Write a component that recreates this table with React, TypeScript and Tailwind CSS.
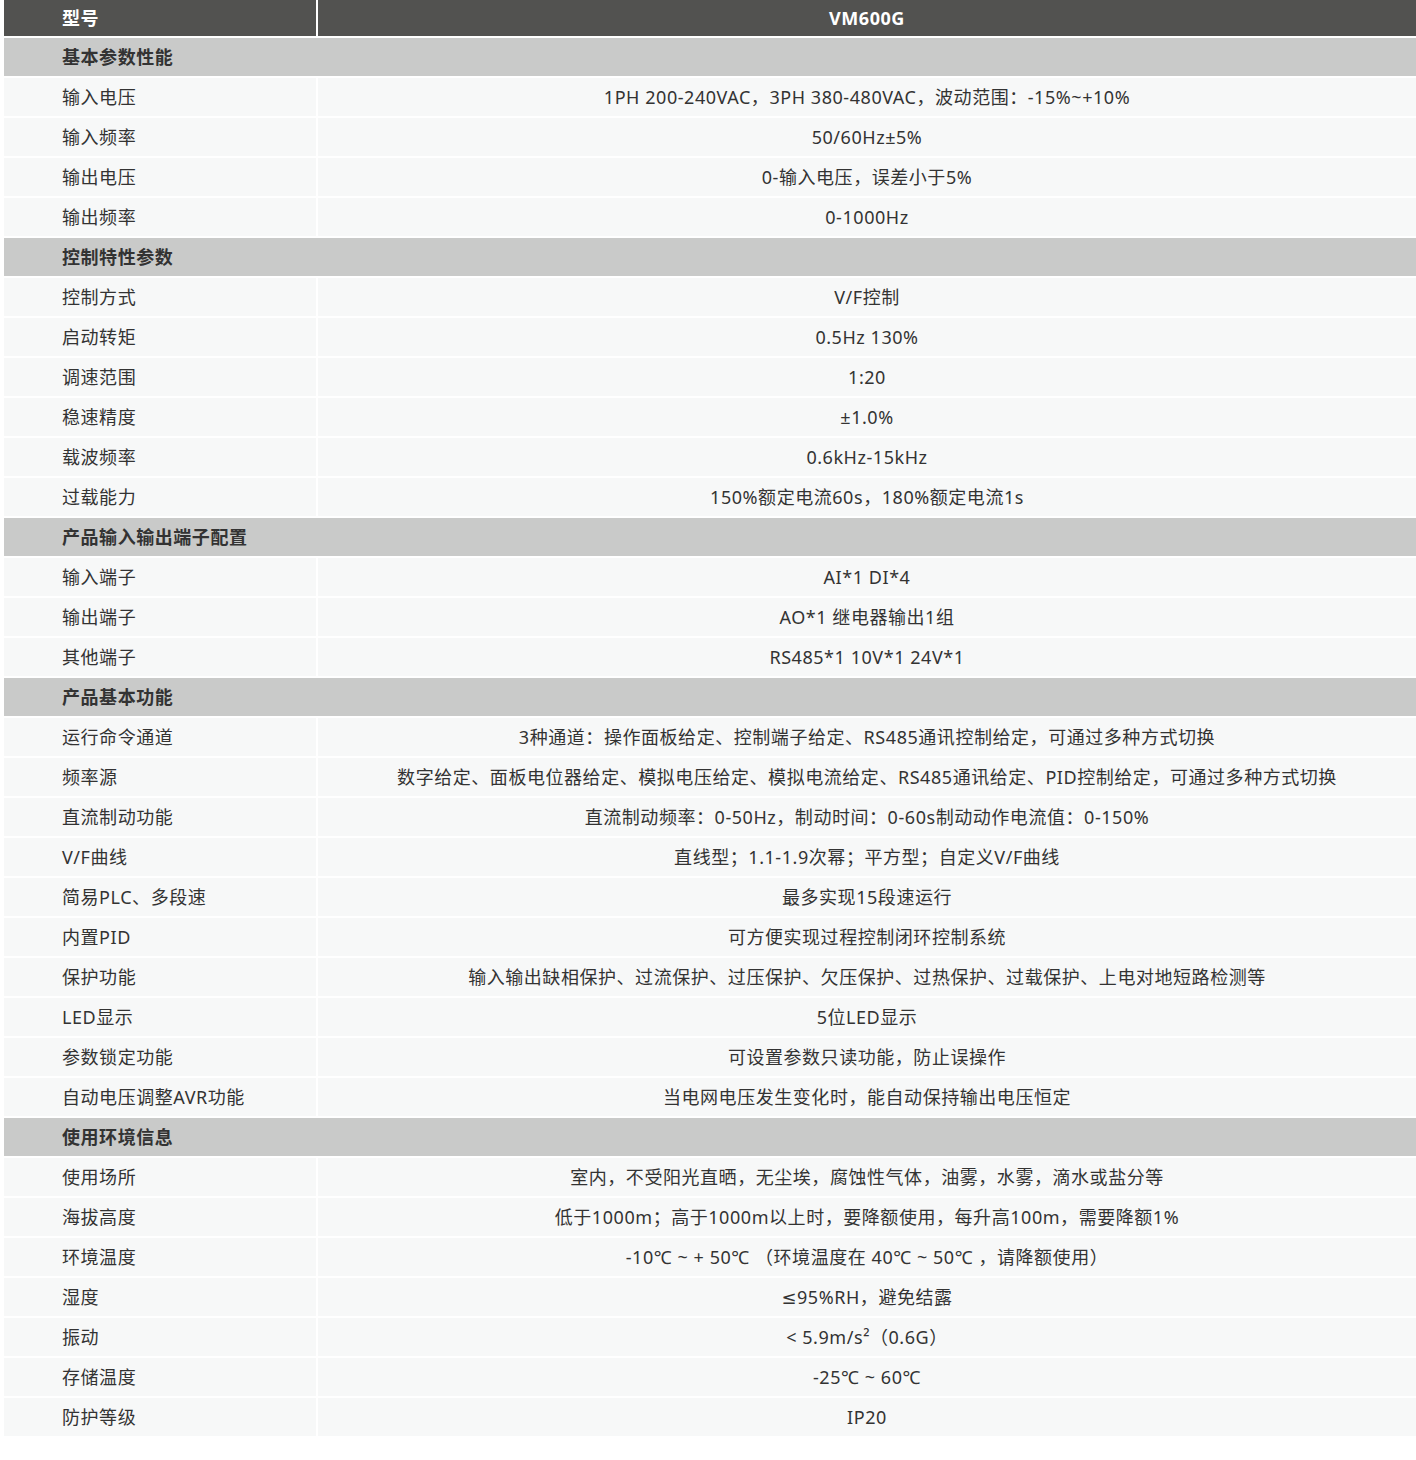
type Row = { section: string } | { label: string; value: string };

const rows: Row[] = [
  { section: '基本参数性能' },
  { label: '输入电压', value: '1PH 200-240VAC，3PH 380-480VAC，波动范围：-15%~+10%' },
  { label: '输入频率', value: '50/60Hz±5%' },
  { label: '输出电压', value: '0-输入电压，误差小于5%' },
  { label: '输出频率', value: '0-1000Hz' },
  { section: '控制特性参数' },
  { label: '控制方式', value: 'V/F控制' },
  { label: '启动转矩', value: '0.5Hz 130%' },
  { label: '调速范围', value: '1:20' },
  { label: '稳速精度', value: '±1.0%' },
  { label: '载波频率', value: '0.6kHz-15kHz' },
  { label: '过载能力', value: '150%额定电流60s，180%额定电流1s' },
  { section: '产品输入输出端子配置' },
  { label: '输入端子', value: 'AI*1 DI*4' },
  { label: '输出端子', value: 'AO*1 继电器输出1组' },
  { label: '其他端子', value: 'RS485*1 10V*1 24V*1' },
  { section: '产品基本功能' },
  { label: '运行命令通道', value: '3种通道：操作面板给定、控制端子给定、RS485通讯控制给定，可通过多种方式切换' },
  { label: '频率源', value: '数字给定、面板电位器给定、模拟电压给定、模拟电流给定、RS485通讯给定、PID控制给定，可通过多种方式切换' },
  { label: '直流制动功能', value: '直流制动频率：0-50Hz，制动时间：0-60s制动动作电流值：0-150%' },
  { label: 'V/F曲线', value: '直线型；1.1-1.9次幂；平方型；自定义V/F曲线' },
  { label: '简易PLC、多段速', value: '最多实现15段速运行' },
  { label: '内置PID', value: '可方便实现过程控制闭环控制系统' },
  { label: '保护功能', value: '输入输出缺相保护、过流保护、过压保护、欠压保护、过热保护、过载保护、上电对地短路检测等' },
  { label: 'LED显示', value: '5位LED显示' },
  { label: '参数锁定功能', value: '可设置参数只读功能，防止误操作' },
  { label: '自动电压调整AVR功能', value: '当电网电压发生变化时，能自动保持输出电压恒定' },
  { section: '使用环境信息' },
  { label: '使用场所', value: '室内，不受阳光直晒，无尘埃，腐蚀性气体，油雾，水雾，滴水或盐分等' },
  { label: '海拔高度', value: '低于1000m；高于1000m以上时，要降额使用，每升高100m，需要降额1%' },
  { label: '环境温度', value: '-10℃ ~ + 50℃ （环境温度在 40℃ ~ 50℃ ，请降额使用）' },
  { label: '湿度', value: '≤95%RH，避免结露' },
  { label: '振动', value: '< 5.9m/s²（0.6G）' },
  { label: '存储温度', value: '-25℃ ~ 60℃' },
  { label: '防护等级', value: 'IP20' },
];

const App = () => {
  return (
    <div className="w-[1416px] min-h-[1460px] bg-white pl-[4px] font-['Noto_Sans','DejaVu_Sans','Noto_Sans_CJK_SC',sans-serif] text-[18px] leading-[24px] tracking-[0.55px] text-[#333333]">
      <div className="flex flex-col gap-[2px]">
        {/* Header */}
        <div className="grid grid-cols-[312px_1fr] gap-[2px] h-[36px]">
          <div className="bg-[#525250] text-white font-bold flex items-center pl-[58px] pb-[1px]">型号</div>
          <div className="bg-[#525250] text-white font-bold flex items-center justify-center pb-[1px]">VM600G</div>
        </div>

        {rows.map((row, i) =>
          'section' in row ? (
            <div key={i} className="h-[38px] bg-[#c9cac9] font-bold flex items-center pl-[58px] pb-[1px]">
              {row.section}
            </div>
          ) : (
            <div key={i} className="grid grid-cols-[312px_1fr] gap-[2px] h-[38px]">
              <div className="bg-[#f7f8f8] flex items-center pl-[58px] pb-[1px]">{row.label}</div>
              <div className="bg-[#f7f8f8] flex items-center justify-center pb-[1px]">{row.value}</div>
            </div>
          )
        )}
      </div>
    </div>
  );
};

export default App;
